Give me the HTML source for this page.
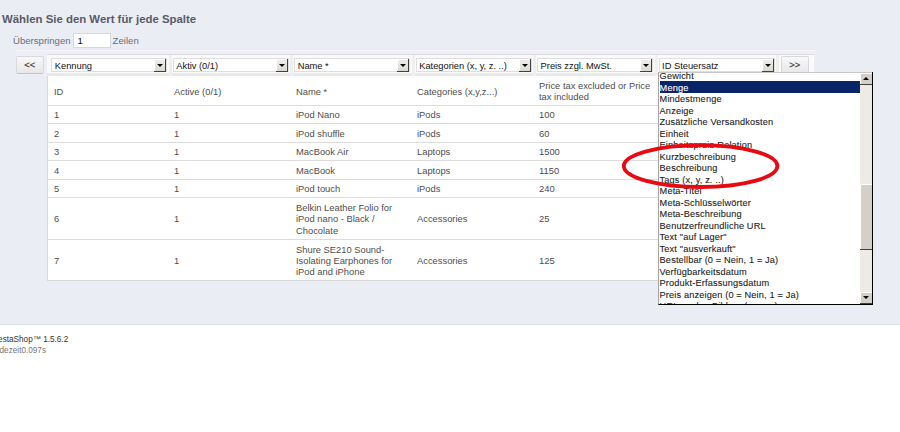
<!DOCTYPE html>
<html><head><meta charset="utf-8">
<style>
*{margin:0;padding:0;box-sizing:border-box}
html,body{width:900px;height:432px;overflow:hidden;background:#fff;font-family:"Liberation Sans",sans-serif;position:relative}
.a{position:absolute;white-space:nowrap}
#bg{position:absolute;left:0;top:0;width:900px;height:325px;background:#ebedf4;border-bottom:1px solid #dcdde6}
#title{left:2px;top:10.8px;font-size:11.4px;font-weight:bold;color:#585a69;line-height:16px}
.lbl{font-size:9.6px;color:#6b6d78;line-height:12px}
#inp{left:73.4px;top:32.8px;width:37.4px;height:15.5px;background:#fff;border:1px solid #d6d8e0}
.btn{position:absolute;top:55.5px;width:28.3px;height:18px;border:1px solid #d8d8dc;border-bottom-color:#c2c2c8;background:linear-gradient(#f8f8f8,#e8e8e8);border-radius:2px;font-size:9.4px;font-weight:normal;-webkit-text-stroke:0.25px #444;color:#444;text-align:center;line-height:15px}
#frame{position:absolute;left:15.5px;top:48.2px;width:799.5px;height:27.8px;background:#eeeef6;border-top:2.5px solid #ebebf4}
#frame:after{content:"";position:absolute;left:0;right:0;top:0;height:1px;background:#f5f5f9}
#tbl{position:absolute;left:47.3px;top:54.3px;width:766.5px;height:226.8px;background:#fff;border:1px solid #d9d9d9}
#hdr{position:absolute;left:47.3px;top:54.3px;width:766.5px;height:21.7px;background:linear-gradient(#fafafa 0,#fafafa 18.2px,#e9e9e9 18.2px,#e9e9e9 21px,#f4f4f4 21px);border-top:1px solid #dcdce2}
.sel{position:absolute;top:58.2px;width:116px;height:14px;background:#fff;border:1px solid #dedede;font-size:9.3px;color:#111;line-height:12px;padding-left:2.4px;padding-top:1px}
.arr{position:absolute;right:0;top:0;width:12.2px;height:13px;background:linear-gradient(#f0efec,#dcd9d2);border-right:1px solid #404040;border-bottom:1px solid #404040;box-shadow:inset 1px 1px 0 #fff}
.arr:after{content:"";position:absolute;left:3px;top:4.5px;border-left:3px solid transparent;border-right:3px solid transparent;border-top:3px solid #000}
.hl{position:absolute;left:48px;width:610px;height:1px;background:#dcdcdc}
.t{position:absolute;font-size:9.9px;color:#4e4e4e;line-height:11.4px;white-space:nowrap;transform:scaleX(0.947);transform-origin:0 0}
#dd{position:absolute;left:658px;top:72.3px;width:214.5px;height:232.6px;background:#fff;border-left:1px solid #a4a4a4;border-top:0;border-right:1px solid #000;border-bottom:1px solid #000;overflow:hidden}
.it{position:absolute;left:0.6px;font-size:9.2px;letter-spacing:0.15px;color:#222;-webkit-text-stroke:0.1px #222;line-height:11.5px;white-space:nowrap}
.sbb{position:absolute;left:0;width:12.5px;height:12px;background:#d4d0c8;border-right:1px solid #404040;border-bottom:1px solid #404040;box-shadow:inset 1px 1px 0 #fff}
.up:after,.dn:after{content:"";position:absolute;left:3px;border-left:3px solid transparent;border-right:3px solid transparent}
.up:after{top:4px;border-bottom:3px solid #000}
.dn:after{top:4.5px;border-top:3px solid #000}
.thumb{position:absolute;left:0;width:12.5px;background:#d4d0c8;border-right:1px solid #404040;border-bottom:1px solid #404040;box-shadow:inset 1px 1px 0 #fff}
#foot1{right:831.8px;top:333.5px;font-size:8.2px;color:#333;line-height:11px}
#foot2{right:854px;top:345.1px;font-size:8.2px;color:#777;line-height:11px}
</style></head><body>
<div id="bg"></div>
<div class="a" id="title">Wählen Sie den Wert für jede Spalte</div>
<div class="a lbl" style="left:13px;top:35px">Überspringen</div>
<div class="a" id="inp"><span style="position:absolute;left:3px;top:1px;font-size:9.6px;color:#111;line-height:12px">1</span></div>
<div class="a lbl" style="left:112.6px;top:35px">Zeilen</div>

<div id="frame"></div>
<div class="btn" style="left:15.5px">&lt;&lt;</div>
<div id="tbl"></div>
<div id="hdr"></div>
<div style="position:absolute;left:168.7px;top:55.3px;width:3px;height:20.5px;background:#efefef"></div>
<div style="position:absolute;left:290.1px;top:55.3px;width:3px;height:20.5px;background:#efefef"></div>
<div style="position:absolute;left:411.6px;top:55.3px;width:3px;height:20.5px;background:#efefef"></div>
<div style="position:absolute;left:533.0px;top:55.3px;width:3px;height:20.5px;background:#efefef"></div>
<div style="position:absolute;left:654.5px;top:55.3px;width:3px;height:20.5px;background:#efefef"></div>
<div style="position:absolute;left:776.2px;top:55.3px;width:3px;height:20.5px;background:#efefef"></div>
<div class="btn" style="left:780.5px">&gt;&gt;</div>

<div class="sel" style="left:51.4px">Kennung<div class="arr"></div></div>
<div class="sel" style="left:172.9px">Aktiv (0/1)<div class="arr"></div></div>
<div class="sel" style="left:294.3px">Name *<div class="arr"></div></div>
<div class="sel" style="left:415.8px">Kategorien (x, y, z. ..)<div class="arr"></div></div>
<div class="sel" style="left:537.2px">Preis zzgl. MwSt.<div class="arr"></div></div>
<div class="sel" style="left:658.7px">ID Steuersatz<div class="arr"></div></div>

<div class="t" style="left:53.60px;top:85.84px">ID</div>
<div class="t" style="left:174.20px;top:85.84px">Active (0/1)</div>
<div class="t" style="left:296.10px;top:85.84px">Name *</div>
<div class="t" style="left:416.80px;top:85.84px">Categories (x,y,z...)</div>
<div class="t" style="left:538.60px;top:79.64px">Price tax excluded or Price<br>tax included</div>
<div class="t" style="left:53.60px;top:109.35px">1</div>
<div class="t" style="left:174.20px;top:109.35px">1</div>
<div class="t" style="left:296.10px;top:109.35px">iPod Nano</div>
<div class="t" style="left:416.80px;top:109.35px">iPods</div>
<div class="t" style="left:538.60px;top:109.35px">100</div>
<div class="t" style="left:53.60px;top:127.85px">2</div>
<div class="t" style="left:174.20px;top:127.85px">1</div>
<div class="t" style="left:296.10px;top:127.85px">iPod shuffle</div>
<div class="t" style="left:416.80px;top:127.85px">iPods</div>
<div class="t" style="left:538.60px;top:127.85px">60</div>
<div class="t" style="left:53.60px;top:146.25px">3</div>
<div class="t" style="left:174.20px;top:146.25px">1</div>
<div class="t" style="left:296.10px;top:146.25px">MacBook Air</div>
<div class="t" style="left:416.80px;top:146.25px">Laptops</div>
<div class="t" style="left:538.60px;top:146.25px">1500</div>
<div class="t" style="left:53.60px;top:164.65px">4</div>
<div class="t" style="left:174.20px;top:164.65px">1</div>
<div class="t" style="left:296.10px;top:164.65px">MacBook</div>
<div class="t" style="left:416.80px;top:164.65px">Laptops</div>
<div class="t" style="left:538.60px;top:164.65px">1150</div>
<div class="t" style="left:53.60px;top:183.15px">5</div>
<div class="t" style="left:174.20px;top:183.15px">1</div>
<div class="t" style="left:296.10px;top:183.15px">iPod touch</div>
<div class="t" style="left:416.80px;top:183.15px">iPods</div>
<div class="t" style="left:538.60px;top:183.15px">240</div>
<div class="t" style="left:53.60px;top:213.30px">6</div>
<div class="t" style="left:174.20px;top:213.30px">1</div>
<div class="t" style="left:296.10px;top:201.90px">Belkin Leather Folio for<br>iPod nano - Black /<br>Chocolate</div>
<div class="t" style="left:416.80px;top:213.30px">Accessories</div>
<div class="t" style="left:538.60px;top:213.30px">25</div>
<div class="t" style="left:53.60px;top:255.05px">7</div>
<div class="t" style="left:174.20px;top:255.05px">1</div>
<div class="t" style="left:296.10px;top:243.65px">Shure SE210 Sound-<br>Isolating Earphones for<br>iPod and iPhone</div>
<div class="t" style="left:416.80px;top:255.05px">Accessories</div>
<div class="t" style="left:538.60px;top:255.05px">125</div>
<div class="hl" style="top:104.80px"></div>
<div class="hl" style="top:123.30px"></div>
<div class="hl" style="top:141.80px"></div>
<div class="hl" style="top:160.10px"></div>
<div class="hl" style="top:178.60px"></div>
<div class="hl" style="top:197.10px"></div>
<div class="hl" style="top:238.90px"></div>
<div id="dd"><div style="position:absolute;left:0;top:0;width:100%;height:1px;background:#c6c6c6"></div>
<div class="it" style="top:-1.21px">Gewicht</div>
<div style="position:absolute;left:0.5px;top:9.20px;width:200.50px;height:11.1px;background:#0a246a"></div>
<div class="it" style="top:10.29px;color:#fff;-webkit-text-stroke-color:#fff">Menge</div>
<div class="it" style="top:21.79px">Mindestmenge</div>
<div class="it" style="top:33.29px">Anzeige</div>
<div class="it" style="top:44.79px">Zusätzliche Versandkosten</div>
<div class="it" style="top:56.29px">Einheit</div>
<div class="it" style="top:67.79px">Einheitspreis-Relation</div>
<div class="it" style="top:79.29px">Kurzbeschreibung</div>
<div class="it" style="top:90.79px">Beschreibung</div>
<div class="it" style="top:102.29px">Tags (x, y, z. ..)</div>
<div class="it" style="top:113.79px">Meta-Titel</div>
<div class="it" style="top:125.29px">Meta-Schlüsselwörter</div>
<div class="it" style="top:136.79px">Meta-Beschreibung</div>
<div class="it" style="top:148.29px">Benutzerfreundliche URL</div>
<div class="it" style="top:159.79px">Text "auf Lager"</div>
<div class="it" style="top:171.29px">Text "ausverkauft"</div>
<div class="it" style="top:182.79px">Bestellbar (0 = Nein, 1 = Ja)</div>
<div class="it" style="top:194.29px">Verfügbarkeitsdatum</div>
<div class="it" style="top:205.79px">Produkt-Erfassungsdatum</div>
<div class="it" style="top:217.29px">Preis anzeigen (0 = Nein, 1 = Ja)</div>
<div class="it" style="top:228.79px">URL zu den Bildern (x,y,z...)</div><div id="sbwrap" style="position:absolute;left:201.00px;top:0.8px;width:12.5px;height:calc(100% - 0.8px);background:#eeebe6">
<div class="sbb" style="top:0"><div class="up"></div></div>
<div class="thumb" style="top:110.70px;height:66.50px"></div>
<div class="sbb" style="bottom:0"><div class="dn"></div></div>
</div></div>
<div class="a" id="foot1">PrestaShop™ 1.5.6.2</div>
<div class="a" id="foot2">Ladezeit0.097s</div>
<svg class="a" style="left:0;top:0" width="900" height="432"><ellipse cx="700.6" cy="166.1" rx="76.8" ry="20.9" fill="none" stroke="#e60a12" stroke-width="3.8"/></svg>
</body></html>
